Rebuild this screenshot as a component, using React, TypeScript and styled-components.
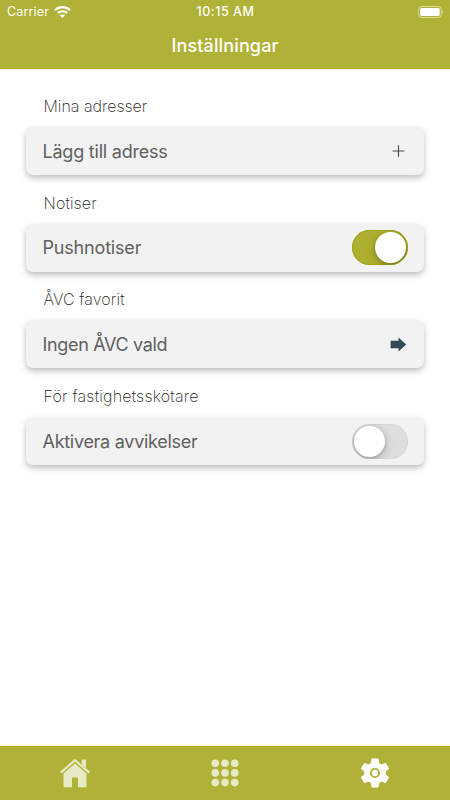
import React from "react";
import styled, { createGlobalStyle } from "styled-components";

const GlobalStyle = createGlobalStyle`
  * { box-sizing: border-box; }
  body { margin: 0; background: #fff; }
`;

const Screen = styled.div`
  width: 450px;
  height: 800px;
  display: flex;
  flex-direction: column;
  overflow: hidden;
  background: #fff;
  font-family: Inter, "Liberation Sans", sans-serif;
`;

const Header = styled.header`
  height: 69.4px;
  flex: none;
  background: #b0b238;
  border-bottom: 1px solid #aaac1c;
  color: #fff;
`;

const StatusBar = styled.div`
  height: 23px;
  display: grid;
  grid-template-columns: 1fr auto 1fr;
  align-items: center;
  padding: 0 6px 0 7px;
  font-size: 12.5px;
  line-height: 23px;
`;

const Carrier = styled.div`
  display: flex;
  align-items: center;
  gap: 5px;
  letter-spacing: 0.15px;
`;

const Clock = styled.div`
  font-weight: 500;
  letter-spacing: 0.55px;
`;

const Battery = styled.div`
  display: flex;
  justify-content: flex-end;
`;

const Title = styled.h1`
  margin: 0;
  text-align: center;
  font-size: 18px;
  font-weight: 550;
  line-height: 46px;
  letter-spacing: 0.13px;
`;

const Content = styled.main`
  flex: 1;
  padding: 26.6px 26px 0;
`;

const Section = styled.section`
  height: 96.7px;
`;

const Label = styled.h2<{ $spacing: number }>`
  margin: 0;
  padding-left: 17.5px;
  height: 31px;
  line-height: 20px;
  font-size: 16px;
  font-weight: 200;
  color: #222;
  letter-spacing: ${(p) => p.$spacing}px;
`;

const Card = styled.div`
  height: 48px;
  display: flex;
  align-items: center;
  justify-content: space-between;
  padding: 0 16px;
  border-radius: 7px;
  background: #f2f2f2;
  box-shadow: 0 3px 6px rgba(0, 0, 0, 0.26);
`;

const CardText = styled.span<{ $spacing: number }>`
  font-size: 18px;
  font-weight: 400;
  line-height: 24px;
  color: #606060;
  padding: 1.6px 0 0 0.5px;
  letter-spacing: ${(p) => p.$spacing}px;
`;

const Track = styled.div<{ $on: boolean }>`
  width: 56px;
  height: 35px;
  flex: none;
  display: flex;
  align-items: center;
  justify-content: ${(p) => (p.$on ? "flex-end" : "flex-start")};
  padding: 0 2px;
  border-radius: 18px;
  background: ${(p) => (p.$on ? "#adaf30" : "#dddddd")};
  box-shadow: inset 0 0 0 1px ${(p) => (p.$on ? "#a3a51c" : "#d8d8d8")};
  overflow: hidden;
`;

const Knob = styled.div`
  width: 31px;
  height: 31px;
  border-radius: 50%;
  background: #fff;
  box-shadow: 0 2px 4px rgba(0, 0, 0, 0.22), 0 2px 12px rgba(0, 0, 0, 0.14);
`;

const TabBar = styled.nav`
  height: 54.5px;
  flex: none;
  display: grid;
  grid-template-columns: repeat(3, 1fr);
  background: #b0b238;
  border-top: 1px solid #aaac1c;
`;

const Tab = styled.div<{ $active?: boolean }>`
  display: flex;
  justify-content: center;
  align-items: center;
  color: ${(p) => (p.$active ? "#fff" : "#e8e9c5")};
`;

const Wifi = () => (
  <svg width="17" height="12" viewBox="0 0 17 12" fill="none" stroke="#fff" strokeWidth="2.2">
    <path d="M1 4.2C5.2.2 11.8.2 16 4.2M3.8 7.1c2.6-2.5 6.8-2.5 9.4 0" />
    <path d="M8.5 12 5.9 9.4c1.5-1.3 3.7-1.3 5.2 0z" fill="#fff" stroke="none" />
  </svg>
);

const BatteryIcon = () => (
  <svg width="26" height="12" viewBox="0 0 26 12">
    <rect x=".6" y=".5" width="22.6" height="11" rx="3" fill="none" stroke="#fff" strokeOpacity=".5" />
    <rect x="2.1" y="2" width="19.6" height="8" rx="1.5" fill="#fff" />
    <path d="M24.4 4.2c1.4.6 1.4 3 0 3.6z" fill="#fff" fillOpacity=".55" />
  </svg>
);

const PlusIcon = () => (
  <svg width="19" height="13" viewBox="0 0 19 13" stroke="#484848" strokeWidth="1.1">
    <path d="M3.7 7h11.6M9.5 1.2v11.6" />
  </svg>
);

const ArrowIcon = () => (
  <svg width="18" height="16" viewBox="0 0 18 16">
    <path d="M.6 4.8h7.9V1.4l7.7 7.1-7.7 7.1v-3.400H.6z" fill="#344955" />
  </svg>
);

const HomeIcon = () => (
  <svg width="32" height="32" viewBox="0 0 32 32" fill="currentColor">
    <path d="M1.8 15.7 16 3.2l14.2 12.5" fill="none" stroke="currentColor" strokeWidth="2.2" />
    <path d="M22.8 2.5H27V11l-4.2-3.7z" />
    <path d="M4.5 16.5 16 6.5l11.5 10v13.7H19v-9.7h-6v9.7H4.5z" />
  </svg>
);

const GridIcon = () => (
  <svg width="28" height="28" viewBox="0 0 28 28" fill="currentColor">
    {[4.2, 13.9, 23.6].map((y) =>
      [4.3, 14, 23.7].map((x) => <circle key={`${x}-${y}`} cx={x} cy={y} r="3.8" />)
    )}
  </svg>
);

const GearIcon = () => (
  <svg width="36" height="36" viewBox="0 0 24 24" fill="currentColor">
    <path
      fillRule="evenodd"
      d="M19.14 12.94c.04-.3.06-.61.06-.94 0-.32-.02-.64-.07-.94l2.03-1.58c.18-.14.23-.41.12-.61l-1.92-3.32c-.12-.22-.37-.29-.59-.22l-2.39.96c-.5-.38-1.03-.7-1.62-.94l-.36-2.54c-.04-.24-.24-.41-.48-.41h-3.84c-.24 0-.43.17-.47.41l-.36 2.54c-.59.24-1.13.57-1.62.94l-2.39-.96c-.22-.08-.47 0-.59.22L2.74 8.87c-.12.21-.08.47.12.61l2.03 1.58c-.05.3-.09.63-.09.94s.02.64.07.94l-2.03 1.58c-.18.14-.23.41-.12.61l1.92 3.32c.12.22.37.29.59.22l2.39-.96c.5.38 1.03.7 1.62.94l.36 2.54c.05.24.24.41.48.41h3.84c.24 0 .44-.17.47-.41l.36-2.54c.59-.24 1.13-.56 1.62-.94l2.39.96c.22.08.47 0 .59-.22l1.92-3.32c.12-.22.07-.47-.12-.61zM12 8.6a3.4 3.4 0 1 0 0 6.8 3.4 3.4 0 0 0 0-6.8z"
    />
    <circle cx="12" cy="12" r="2.1" />
  </svg>
);

const Toggle = ({ on }: { on: boolean }) => (
  <Track $on={on} role="switch" aria-checked={on}>
    <Knob />
  </Track>
);

const rows = [
  { label: "Mina adresser", labelSpacing: 0, text: "Lägg till adress", spacing: -0.22, control: <PlusIcon /> },
  { label: "Notiser", labelSpacing: 0.15, text: "Pushnotiser", spacing: -0.18, control: <Toggle on /> },
  { label: "ÅVC favorit", labelSpacing: 0.1, text: "Ingen ÅVC vald", spacing: -0.33, control: <ArrowIcon /> },
  { label: "För fastighetsskötare", labelSpacing: 0.22, text: "Aktivera avvikelser", spacing: -0.28, control: <Toggle on={false} /> },
];

export default function App() {
  return (
    <Screen>
      <GlobalStyle />
      <Header>
        <StatusBar>
          <Carrier>Carrier <Wifi /></Carrier>
          <Clock>10:15 AM</Clock>
          <Battery><BatteryIcon /></Battery>
        </StatusBar>
        <Title>Inställningar</Title>
      </Header>
      <Content>
        {rows.map((row) => (
          <Section key={row.label}>
            <Label $spacing={row.labelSpacing}>{row.label}</Label>
            <Card>
              <CardText $spacing={row.spacing}>{row.text}</CardText>
              {row.control}
            </Card>
          </Section>
        ))}
      </Content>
      <TabBar>
        <Tab><HomeIcon /></Tab>
        <Tab><GridIcon /></Tab>
        <Tab $active><GearIcon /></Tab>
      </TabBar>
    </Screen>
  );
}
